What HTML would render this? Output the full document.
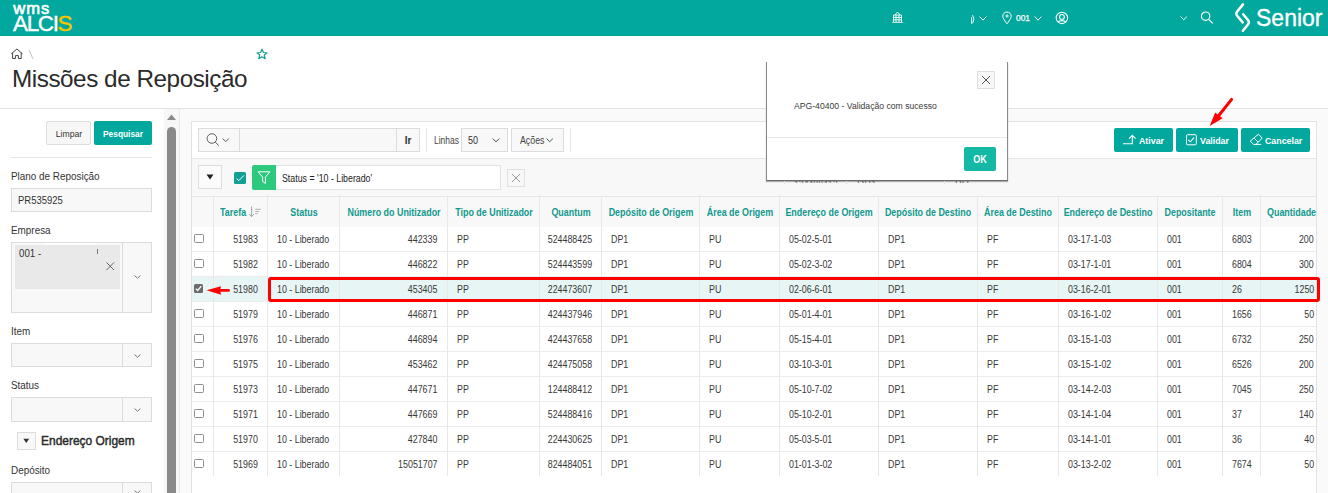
<!DOCTYPE html>
<html><head><meta charset="utf-8"><title>Missões de Reposição</title>
<style>
html,body{margin:0;padding:0;}
body{width:1328px;height:493px;overflow:hidden;position:relative;background:#fff;font-family:"Liberation Sans",sans-serif;color:#333;}
.a{position:absolute;display:block;}
.t{position:absolute;white-space:nowrap;}
</style></head><body>
<div class="a" style="left:0px;top:0px;width:1328px;height:36px;background:#02a89d"></div>
<div class="t" style="left:13.30px;top:0.75px;font-size:16.6px;line-height:16.6px;transform-origin:0 0;color:#fff;letter-spacing:0.9px;-webkit-text-stroke:0.6px #fff;">wms</div>
<div class="t" style="left:13.00px;top:13.44px;font-size:22.4px;line-height:22.4px;transform-origin:0 0;color:#fff;letter-spacing:-1.3px;-webkit-text-stroke:0.4px #fff;">ALCI<span style="color:#f6c500;-webkit-text-stroke:0.4px #f6c500">S</span></div>
<svg class="a" style="left:891px;top:10px" width="13" height="14" viewBox="0 0 13 14"><g fill="none" stroke="#fff" stroke-width="0.9"><path d="M2.5 12V5h8v7"/><path d="M4 5 6.5 2 9 5"/><path d="M1.2 12.3h10.6"/><path d="M2.5 7.4h8M2.5 9.8h8M5 5v7M8 5v7"/></g></svg>
<svg class="a" style="left:969px;top:14px" width="8" height="11" viewBox="0 0 8 11"><path d="M2.6 3.2V9.8" stroke="#fff" stroke-width="0.9"/><path d="M3.6 1.2Q6.2 5.2 3.6 9.2" fill="none" stroke="#fff" stroke-width="1"/></svg>
<svg class="a" style="left:979px;top:15.5px" width="8" height="5" viewBox="0 0 8 5"><path d="M0.6 0.6 4.0 4.2 7.4 0.6" fill="none" stroke="#fff" stroke-width="1.0"/></svg>
<svg class="a" style="left:1001px;top:11px" width="12" height="14" viewBox="0 0 12 14"><path d="M6 12.8C6 12.8 1.8 7.6 1.8 5.2A4.2 4.2 0 0 1 10.2 5.2C10.2 7.6 6 12.8 6 12.8Z" fill="none" stroke="#fff" stroke-width="1"/><circle cx="6" cy="5" r="1.1" fill="none" stroke="#fff" stroke-width="0.9"/></svg>
<div class="t" style="left:1016.20px;top:13.00px;font-size:9.8px;line-height:9.8px;transform:scaleX(0.86);transform-origin:0 0;color:#fff;-webkit-text-stroke:0.25px #fff;">001</div>
<svg class="a" style="left:1034px;top:15.5px" width="8" height="5" viewBox="0 0 8 5"><path d="M0.6 0.6 4.0 4.2 7.4 0.6" fill="none" stroke="#fff" stroke-width="1.0"/></svg>
<svg class="a" style="left:1055px;top:11px" width="14" height="14" viewBox="0 0 14 14"><circle cx="6.9" cy="6.9" r="5.7" fill="none" stroke="#fff" stroke-width="1.1"/><circle cx="6.9" cy="5.9" r="2.4" fill="none" stroke="#fff" stroke-width="1.1"/><path d="M3.2 11C4.3 9.1 9.5 9.1 10.6 11" fill="none" stroke="#fff" stroke-width="1.1"/></svg>
<svg class="a" style="left:1180px;top:16px" width="7.5" height="4.5" viewBox="0 0 7.5 4.5"><path d="M0.6 0.6 3.75 3.7 6.9 0.6" fill="none" stroke="#fff" stroke-width="1.0"/></svg>
<svg class="a" style="left:1200px;top:11px" width="14" height="13" viewBox="0 0 14 13"><circle cx="5.6" cy="5.2" r="4.2" fill="none" stroke="#fff" stroke-width="1.2"/><path d="M8.6 8.4 12.8 12.4" stroke="#fff" stroke-width="1.3"/></svg>
<svg class="a" style="left:1234px;top:3px" width="18" height="30" viewBox="0 0 18 30"><path d="M9 1.4 3.3 8.4Q1.4 10.7 3.3 13L8.7 19.4" fill="none" stroke="#fff" stroke-width="2.5" stroke-linecap="round"/><path d="M9.1 11.2 14 17Q15.8 19.2 14 21.5L8.9 27.8" fill="none" stroke="#fff" stroke-width="2.5" stroke-linecap="round"/></svg>
<div class="t" style="left:1256.40px;top:5.78px;font-size:24.6px;line-height:24.6px;transform:scaleX(0.935);transform-origin:0 0;color:#fff;-webkit-text-stroke:0.35px #fff;">Senior</div>
<svg class="a" style="left:10px;top:48px" width="14" height="12" viewBox="0 0 14 12"><path d="M1.3 5.8 6.9 1 12.5 5.8M2.6 4.8V10.5H5.4V7.6H8.4V10.5H11.2V4.8" fill="none" stroke="#3a3a3a" stroke-width="0.95" stroke-linejoin="round"/></svg>
<svg class="a" style="left:28px;top:49px" width="6" height="11" viewBox="0 0 6 11"><path d="M1 1 5 10" stroke="#bbb" stroke-width="0.9"/></svg>
<svg class="a" style="left:255px;top:47px" width="14" height="13" viewBox="0 0 14 13"><path d="M7 2.2 8.4 5.5 12 5.8 9.3 8.1 10.2 11.6 7 9.7 3.8 11.6 4.7 8.1 2 5.8 5.6 5.5Z" fill="none" stroke="#1a9e93" stroke-width="1.25" stroke-linejoin="round"/></svg>
<div class="t" style="left:12.00px;top:66.83px;font-size:24.3px;line-height:24.3px;transform-origin:0 0;color:#2b2b2b;letter-spacing:-0.47px;">Missões de Reposição</div>
<div class="a" style="left:0px;top:108px;width:1328px;height:1px;background:#e2e2e2"></div>
<div class="a" style="left:164px;top:109px;width:15px;height:384px;background:#f7f7f7"></div>
<div class="a" style="left:179px;top:109px;width:1px;height:384px;background:#e8e8e8"></div>
<svg class="a" style="left:166px;top:113px" width="11" height="8" viewBox="0 0 11 8"><path d="M1 7 5.5 1.5 10 7Z" fill="#8a8a8a"/></svg>
<div class="a" style="left:167px;top:127px;width:9px;height:366px;background:#8a8a8a;border-radius:4.5px 4.5px 0 0"></div>
<div class="a" style="left:46px;top:121px;width:45px;height:24px;background:#f7f7f7;border:1px solid #dedede;box-sizing:border-box;border-radius:2px"></div>
<div class="t" style="left:-31.50px;width:200px;top:129.07px;font-size:9.6px;line-height:9.6px;text-align:center;transform:scaleX(0.9);transform-origin:50% 0;color:#333;">Limpar</div>
<div class="a" style="left:94px;top:121px;width:58px;height:24px;background:#02a89d;border-radius:2px"></div>
<div class="t" style="left:23.00px;width:200px;top:129.07px;font-size:9.6px;line-height:9.6px;text-align:center;transform:scaleX(0.87);transform-origin:50% 0;color:#fff;font-weight:bold;">Pesquisar</div>
<div class="a" style="left:11px;top:157px;width:141px;height:1px;background:#e5e5e5"></div>
<div class="t" style="left:11.20px;top:171.49px;font-size:11px;line-height:11px;transform:scaleX(0.9);transform-origin:0 0;color:#333;">Plano de Reposição</div>
<div class="a" style="left:11px;top:188px;width:141px;height:24px;background:#f8f8f8;border:1px solid #dcdcdc;box-sizing:border-box"></div>
<div class="t" style="left:17.50px;top:195.26px;font-size:10.8px;line-height:10.8px;transform:scaleX(0.88);transform-origin:0 0;color:#333;">PR535925</div>
<div class="t" style="left:11.20px;top:224.79px;font-size:11px;line-height:11px;transform:scaleX(0.9);transform-origin:0 0;color:#333;">Empresa</div>
<div class="a" style="left:11px;top:242px;width:141px;height:71px;background:#f8f8f8;border:1px solid #dcdcdc;box-sizing:border-box"></div>
<div class="a" style="left:122px;top:242px;width:1px;height:71px;background:#dcdcdc"></div>
<div class="a" style="left:15px;top:245px;width:105px;height:44px;background:#e9e9e9"></div>
<div class="a" style="left:42px;top:243px;width:55px;height:2px;background:#fdfdfd"></div>
<div class="t" style="left:18.50px;top:248.36px;font-size:10.8px;line-height:10.8px;transform:scaleX(0.9);transform-origin:0 0;color:#333;">001 -</div>
<div class="a" style="left:97px;top:249px;width:1px;height:5px;background:#777"></div>
<svg class="a" style="left:105px;top:261px" width="10" height="10" viewBox="0 0 10 10"><path d="M1.5 1.5 9 9M9 1.5 1.5 9" stroke="#555" stroke-width="0.9"/></svg>
<svg class="a" style="left:133.5px;top:275px" width="7" height="4" viewBox="0 0 7 4"><path d="M0.6 0.6 3.5 3.2 6.4 0.6" fill="none" stroke="#777" stroke-width="1"/></svg>
<div class="t" style="left:11.20px;top:325.89px;font-size:11px;line-height:11px;transform:scaleX(0.9);transform-origin:0 0;color:#333;">Item</div>
<div class="a" style="left:11px;top:343px;width:141px;height:24px;background:#f8f8f8;border:1px solid #dcdcdc;box-sizing:border-box"></div>
<div class="a" style="left:122px;top:343px;width:1px;height:24px;background:#dcdcdc"></div>
<svg class="a" style="left:133.5px;top:353.5px" width="7" height="4" viewBox="0 0 7 4"><path d="M0.6 0.6 3.5 3.2 6.4 0.6" fill="none" stroke="#777" stroke-width="1"/></svg>
<div class="t" style="left:11.20px;top:379.89px;font-size:11px;line-height:11px;transform:scaleX(0.9);transform-origin:0 0;color:#333;">Status</div>
<div class="a" style="left:11px;top:397px;width:141px;height:25px;background:#f8f8f8;border:1px solid #dcdcdc;box-sizing:border-box"></div>
<div class="a" style="left:122px;top:397px;width:1px;height:25px;background:#dcdcdc"></div>
<svg class="a" style="left:133.5px;top:408px" width="7" height="4" viewBox="0 0 7 4"><path d="M0.6 0.6 3.5 3.2 6.4 0.6" fill="none" stroke="#777" stroke-width="1"/></svg>
<div class="a" style="left:17px;top:432px;width:19px;height:18px;background:#f8f8f8;border:1px solid #dcdcdc;box-sizing:border-box"></div>
<svg class="a" style="left:23px;top:438px" width="7" height="6" viewBox="0 0 7 6"><path d="M0.3 0.8H6.2L3.25 4.9Z" fill="#333"/></svg>
<div class="t" style="left:41.40px;top:433.60px;font-size:13px;line-height:13px;transform:scaleX(0.92);transform-origin:0 0;color:#2a2a2a;-webkit-text-stroke:0.45px #2a2a2a;">Endereço Origem</div>
<div class="t" style="left:11.20px;top:464.89px;font-size:11px;line-height:11px;transform:scaleX(0.9);transform-origin:0 0;color:#333;">Depósito</div>
<div class="a" style="left:11px;top:482px;width:141px;height:18px;background:#f8f8f8;border:1px solid #dcdcdc;box-sizing:border-box"></div>
<div class="a" style="left:122px;top:482px;width:1px;height:11px;background:#dcdcdc"></div>
<svg class="a" style="left:133.5px;top:490px" width="7" height="4" viewBox="0 0 7 4"><path d="M0.6 0.6 3.5 3.2 6.4 0.6" fill="none" stroke="#777" stroke-width="1"/></svg>
<div class="a" style="left:180px;top:109px;width:1148px;height:384px;background:#fafafa"></div>
<div class="a" style="left:191px;top:121px;width:1126px;height:379px;background:#fff;border:1px solid #e2e2e2;box-sizing:border-box"></div>
<div class="a" style="left:192px;top:158px;width:1124px;height:1px;background:#e6e6e6"></div>
<div class="a" style="left:192px;top:159px;width:1124px;height:37px;background:#f8f8f8"></div>
<div class="a" style="left:192px;top:196px;width:1124px;height:1px;background:#e6e6e6"></div>
<div class="a" style="left:192px;top:197px;width:1124px;height:30px;background:#f8f8f8"></div>
<div class="a" style="left:198px;top:128px;width:222px;height:24px;background:#f8f8f8;border:1px solid #dcdcdc;box-sizing:border-box"></div>
<div class="a" style="left:239px;top:128px;width:1px;height:24px;background:#dcdcdc"></div>
<div class="a" style="left:396px;top:128px;width:1px;height:24px;background:#dcdcdc"></div>
<svg class="a" style="left:205px;top:133px" width="15" height="14" viewBox="0 0 15 14"><circle cx="6.9" cy="5.5" r="4.8" fill="none" stroke="#555" stroke-width="0.95"/><path d="M10.3 9.1 13.7 12.6" stroke="#555" stroke-width="0.95"/></svg>
<svg class="a" style="left:221.5px;top:137.6px" width="7.5" height="4.4" viewBox="0 0 7.5 4.4"><path d="M0.6 0.6 3.75 3.6000000000000005 6.9 0.6" fill="none" stroke="#555" stroke-width="0.95"/></svg>
<div class="t" style="left:308.00px;width:200px;top:136.34px;font-size:10px;line-height:10px;text-align:center;transform-origin:50% 0;color:#333;font-weight:bold;">Ir</div>
<div class="a" style="left:426px;top:128px;width:1px;height:24px;background:#e5e5e5"></div>
<div class="t" style="left:433.50px;top:136.34px;font-size:10px;line-height:10px;transform:scaleX(0.85);transform-origin:0 0;color:#444;">Linhas</div>
<div class="a" style="left:461px;top:128px;width:47px;height:24px;background:#f8f8f8;border:1px solid #dcdcdc;box-sizing:border-box"></div>
<div class="t" style="left:468.00px;top:136.34px;font-size:10px;line-height:10px;transform:scaleX(0.9);transform-origin:0 0;color:#333;">50</div>
<svg class="a" style="left:492px;top:138px" width="8" height="4.5" viewBox="0 0 8 4.5"><path d="M0.6 0.6 4.0 3.7 7.4 0.6" fill="none" stroke="#555" stroke-width="1"/></svg>
<div class="a" style="left:511px;top:128px;width:53px;height:24px;background:#f8f8f8;border:1px solid #dcdcdc;box-sizing:border-box"></div>
<div class="t" style="left:520.00px;top:136.34px;font-size:10px;line-height:10px;transform:scaleX(0.88);transform-origin:0 0;color:#444;">Ações</div>
<svg class="a" style="left:546px;top:138px" width="7.5" height="4.5" viewBox="0 0 7.5 4.5"><path d="M0.6 0.6 3.75 3.7 6.9 0.6" fill="none" stroke="#555" stroke-width="1"/></svg>
<div class="a" style="left:570px;top:128px;width:1px;height:24px;background:#e5e5e5"></div>
<div class="a" style="left:1114px;top:128px;width:59px;height:24px;background:#02a89d;border-radius:2px"></div>
<svg class="a" style="left:1122px;top:133px" width="15" height="13" viewBox="0 0 15 13"><path d="M1 10.8H10.3V2.6M7 5.6 10.3 2.3 13.6 5.6" fill="none" stroke="#fff" stroke-width="1.05"/></svg>
<div class="t" style="left:1138.50px;top:136.19px;font-size:9.7px;line-height:9.7px;transform:scaleX(0.91);transform-origin:0 0;color:#fff;font-weight:bold;">Ativar</div>
<div class="a" style="left:1176px;top:128px;width:62px;height:24px;background:#02a89d;border-radius:2px"></div>
<svg class="a" style="left:1185px;top:133px" width="13" height="13" viewBox="0 0 13 13"><rect x="1.5" y="1.7" width="9.8" height="10.1" rx="1" fill="none" stroke="#fff" stroke-width="1"/><path d="M3.2 6.8 5.4 8.8 8.9 4.6" fill="none" stroke="#fff" stroke-width="1.1"/></svg>
<div class="t" style="left:1199.50px;top:136.19px;font-size:9.7px;line-height:9.7px;transform:scaleX(0.91);transform-origin:0 0;color:#fff;font-weight:bold;">Validar</div>
<div class="a" style="left:1241px;top:128px;width:69px;height:24px;background:#02a89d;border-radius:2px"></div>
<svg class="a" style="left:1249px;top:132px" width="14" height="14" viewBox="0 0 14 14"><path d="M9.4 2.2 13.2 6.1 6.9 12.4H4.6L1.2 9.1Z M6.9 12.4H12.2" fill="none" stroke="#fff" stroke-width="1" stroke-linejoin="round"/><path d="M5.2 6.2 9.1 10.1" stroke="#fff" stroke-width="1"/></svg>
<div class="t" style="left:1265.00px;top:136.19px;font-size:9.7px;line-height:9.7px;transform:scaleX(0.91);transform-origin:0 0;color:#fff;font-weight:bold;">Cancelar</div>
<div class="a" style="left:198px;top:165px;width:24px;height:24px;background:#fbfbfb;border:1px solid #dedede;box-sizing:border-box"></div>
<svg class="a" style="left:206px;top:174px" width="8" height="6" viewBox="0 0 8 6"><path d="M0.5 0.5H7.5L4 5.5Z" fill="#222"/></svg>
<div class="a" style="left:234px;top:172px;width:12px;height:12px;background:#11a094;border-radius:1.5px"></div>
<svg class="a" style="left:235px;top:173px" width="10" height="10" viewBox="0 0 10 10"><path d="M1.6 5.6 3.8 7.6 9 2.4" fill="none" stroke="#fff" stroke-width="1"/></svg>
<div class="a" style="left:252px;top:165px;width:24px;height:25px;background:#2dca7e;border-radius:2px 0 0 2px"></div>
<svg class="a" style="left:256px;top:169px" width="16" height="16" viewBox="0 0 16 16"><path d="M2.2 2.8H13.8L9.4 8.2V14.4L6.6 12.4V8.2Z" fill="none" stroke="#fff" stroke-width="1" stroke-linejoin="round"/></svg>
<div class="a" style="left:276px;top:165px;width:225px;height:25px;background:#fff;border:1px solid #e2e2e2;border-left:none;box-sizing:border-box"></div>
<div class="t" style="left:281.50px;top:174.13px;font-size:10px;line-height:10px;transform:scaleX(0.88);transform-origin:0 0;color:#222;">Status = '10 - Liberado'</div>
<div class="a" style="left:507px;top:169px;width:18px;height:18px;background:#f8f8f8;border:1px solid #e0e0e0;box-sizing:border-box"></div>
<svg class="a" style="left:511px;top:173px" width="10" height="10" viewBox="0 0 10 10"><path d="M1 1 9 9M9 1 1 9" stroke="#999" stroke-width="1"/></svg>
<div class="a" style="left:192px;top:276px;width:1124px;height:25px;background:#e7f5f4"></div>
<div class="a" style="left:192px;top:251px;width:1124px;height:1px;background:#ececec"></div>
<div class="a" style="left:192px;top:276px;width:1124px;height:1px;background:#ececec"></div>
<div class="a" style="left:192px;top:301px;width:1124px;height:1px;background:#ececec"></div>
<div class="a" style="left:192px;top:326px;width:1124px;height:1px;background:#ececec"></div>
<div class="a" style="left:192px;top:351px;width:1124px;height:1px;background:#ececec"></div>
<div class="a" style="left:192px;top:376px;width:1124px;height:1px;background:#ececec"></div>
<div class="a" style="left:192px;top:401px;width:1124px;height:1px;background:#ececec"></div>
<div class="a" style="left:192px;top:426px;width:1124px;height:1px;background:#ececec"></div>
<div class="a" style="left:192px;top:451px;width:1124px;height:1px;background:#ececec"></div>
<div class="a" style="left:213px;top:197px;width:1px;height:279px;background:#e8e8e8"></div>
<div class="a" style="left:267px;top:197px;width:1px;height:279px;background:#e8e8e8"></div>
<div class="a" style="left:339px;top:197px;width:1px;height:279px;background:#e8e8e8"></div>
<div class="a" style="left:447px;top:197px;width:1px;height:279px;background:#e8e8e8"></div>
<div class="a" style="left:539px;top:197px;width:1px;height:279px;background:#e8e8e8"></div>
<div class="a" style="left:601px;top:197px;width:1px;height:279px;background:#e8e8e8"></div>
<div class="a" style="left:699px;top:197px;width:1px;height:279px;background:#e8e8e8"></div>
<div class="a" style="left:779px;top:197px;width:1px;height:279px;background:#e8e8e8"></div>
<div class="a" style="left:878px;top:197px;width:1px;height:279px;background:#e8e8e8"></div>
<div class="a" style="left:977px;top:197px;width:1px;height:279px;background:#e8e8e8"></div>
<div class="a" style="left:1058px;top:197px;width:1px;height:279px;background:#e8e8e8"></div>
<div class="a" style="left:1157px;top:197px;width:1px;height:279px;background:#e8e8e8"></div>
<div class="a" style="left:1222px;top:197px;width:1px;height:279px;background:#e8e8e8"></div>
<div class="a" style="left:1260px;top:197px;width:1px;height:279px;background:#e8e8e8"></div>
<div class="t" style="left:220.00px;top:207.97px;font-size:10.2px;line-height:10.2px;transform:scaleX(0.875);transform-origin:0 0;color:#10998e;font-weight:bold;">Tarefa</div>
<svg class="a" style="left:249px;top:206px" width="13" height="12" viewBox="0 0 13 12"><path d="M2.6 0.5V10.5M0.2 8 2.6 10.6 5 8" fill="none" stroke="#999" stroke-width="0.9"/><path d="M6.3 3.3H11.9M6.3 5.5H10.3M6.3 7.6H8.8" stroke="#aaa" stroke-width="0.9"/></svg>
<div class="t" style="left:203.50px;width:200px;top:207.97px;font-size:10.2px;line-height:10.2px;text-align:center;transform:scaleX(0.875);transform-origin:50% 0;color:#10998e;font-weight:bold;">Status</div>
<div class="t" style="left:293.50px;width:200px;top:207.97px;font-size:10.2px;line-height:10.2px;text-align:center;transform:scaleX(0.875);transform-origin:50% 0;color:#10998e;font-weight:bold;">Número do Unitizador</div>
<div class="t" style="left:393.50px;width:200px;top:207.97px;font-size:10.2px;line-height:10.2px;text-align:center;transform:scaleX(0.875);transform-origin:50% 0;color:#10998e;font-weight:bold;">Tipo de Unitizador</div>
<div class="t" style="left:470.50px;width:200px;top:207.97px;font-size:10.2px;line-height:10.2px;text-align:center;transform:scaleX(0.875);transform-origin:50% 0;color:#10998e;font-weight:bold;">Quantum</div>
<div class="t" style="left:550.50px;width:200px;top:207.97px;font-size:10.2px;line-height:10.2px;text-align:center;transform:scaleX(0.875);transform-origin:50% 0;color:#10998e;font-weight:bold;">Depósito de Origem</div>
<div class="t" style="left:639.50px;width:200px;top:207.97px;font-size:10.2px;line-height:10.2px;text-align:center;transform:scaleX(0.875);transform-origin:50% 0;color:#10998e;font-weight:bold;">Área de Origem</div>
<div class="t" style="left:729.00px;width:200px;top:207.97px;font-size:10.2px;line-height:10.2px;text-align:center;transform:scaleX(0.875);transform-origin:50% 0;color:#10998e;font-weight:bold;">Endereço de Origem</div>
<div class="t" style="left:828.00px;width:200px;top:207.97px;font-size:10.2px;line-height:10.2px;text-align:center;transform:scaleX(0.875);transform-origin:50% 0;color:#10998e;font-weight:bold;">Depósito de Destino</div>
<div class="t" style="left:918.00px;width:200px;top:207.97px;font-size:10.2px;line-height:10.2px;text-align:center;transform:scaleX(0.875);transform-origin:50% 0;color:#10998e;font-weight:bold;">Área de Destino</div>
<div class="t" style="left:1008.00px;width:200px;top:207.97px;font-size:10.2px;line-height:10.2px;text-align:center;transform:scaleX(0.875);transform-origin:50% 0;color:#10998e;font-weight:bold;">Endereço de Destino</div>
<div class="t" style="left:1090.00px;width:200px;top:207.97px;font-size:10.2px;line-height:10.2px;text-align:center;transform:scaleX(0.875);transform-origin:50% 0;color:#10998e;font-weight:bold;">Depositante</div>
<div class="t" style="left:1141.50px;width:200px;top:207.97px;font-size:10.2px;line-height:10.2px;text-align:center;transform:scaleX(0.875);transform-origin:50% 0;color:#10998e;font-weight:bold;">Item</div>
<div class="t" style="left:1267.30px;top:207.97px;font-size:10.2px;line-height:10.2px;transform:scaleX(0.875);transform-origin:0 0;color:#10998e;font-weight:bold;white-space:nowrap;">Quantidade</div>
<div class="a" style="left:194px;top:234px;width:9.5px;height:9px;border:1px solid #8f8f8f;border-radius:1.5px;box-sizing:border-box;background:#fff"></div>
<div class="t" style="right:1070.40px;top:235.44px;font-size:10px;line-height:10px;text-align:right;transform:scaleX(0.885);transform-origin:100% 0;color:#383838;">51983</div>
<div class="t" style="left:276.90px;top:235.44px;font-size:10px;line-height:10px;transform:scaleX(0.885);transform-origin:0 0;color:#383838;">10 - Liberado</div>
<div class="t" style="right:890.40px;top:235.44px;font-size:10px;line-height:10px;text-align:right;transform:scaleX(0.885);transform-origin:100% 0;color:#383838;">442339</div>
<div class="t" style="left:456.90px;top:235.44px;font-size:10px;line-height:10px;transform:scaleX(0.885);transform-origin:0 0;color:#383838;">PP</div>
<div class="t" style="right:736.40px;top:235.44px;font-size:10px;line-height:10px;text-align:right;transform:scaleX(0.885);transform-origin:100% 0;color:#383838;">524488425</div>
<div class="t" style="left:610.90px;top:235.44px;font-size:10px;line-height:10px;transform:scaleX(0.885);transform-origin:0 0;color:#383838;">DP1</div>
<div class="t" style="left:708.90px;top:235.44px;font-size:10px;line-height:10px;transform:scaleX(0.885);transform-origin:0 0;color:#383838;">PU</div>
<div class="t" style="left:788.90px;top:235.44px;font-size:10px;line-height:10px;transform:scaleX(0.885);transform-origin:0 0;color:#383838;">05-02-5-01</div>
<div class="t" style="left:887.90px;top:235.44px;font-size:10px;line-height:10px;transform:scaleX(0.885);transform-origin:0 0;color:#383838;">DP1</div>
<div class="t" style="left:986.90px;top:235.44px;font-size:10px;line-height:10px;transform:scaleX(0.885);transform-origin:0 0;color:#383838;">PF</div>
<div class="t" style="left:1067.90px;top:235.44px;font-size:10px;line-height:10px;transform:scaleX(0.885);transform-origin:0 0;color:#383838;">03-17-1-03</div>
<div class="t" style="left:1166.90px;top:235.44px;font-size:10px;line-height:10px;transform:scaleX(0.885);transform-origin:0 0;color:#383838;">001</div>
<div class="t" style="left:1231.90px;top:235.44px;font-size:10px;line-height:10px;transform:scaleX(0.885);transform-origin:0 0;color:#383838;">6803</div>
<div class="t" style="right:14.20px;top:235.44px;font-size:10px;line-height:10px;text-align:right;transform:scaleX(0.885);transform-origin:100% 0;color:#383838;">200</div>
<div class="a" style="left:194px;top:259px;width:9.5px;height:9px;border:1px solid #8f8f8f;border-radius:1.5px;box-sizing:border-box;background:#fff"></div>
<div class="t" style="right:1070.40px;top:260.44px;font-size:10px;line-height:10px;text-align:right;transform:scaleX(0.885);transform-origin:100% 0;color:#383838;">51982</div>
<div class="t" style="left:276.90px;top:260.44px;font-size:10px;line-height:10px;transform:scaleX(0.885);transform-origin:0 0;color:#383838;">10 - Liberado</div>
<div class="t" style="right:890.40px;top:260.44px;font-size:10px;line-height:10px;text-align:right;transform:scaleX(0.885);transform-origin:100% 0;color:#383838;">446822</div>
<div class="t" style="left:456.90px;top:260.44px;font-size:10px;line-height:10px;transform:scaleX(0.885);transform-origin:0 0;color:#383838;">PP</div>
<div class="t" style="right:736.40px;top:260.44px;font-size:10px;line-height:10px;text-align:right;transform:scaleX(0.885);transform-origin:100% 0;color:#383838;">524443599</div>
<div class="t" style="left:610.90px;top:260.44px;font-size:10px;line-height:10px;transform:scaleX(0.885);transform-origin:0 0;color:#383838;">DP1</div>
<div class="t" style="left:708.90px;top:260.44px;font-size:10px;line-height:10px;transform:scaleX(0.885);transform-origin:0 0;color:#383838;">PU</div>
<div class="t" style="left:788.90px;top:260.44px;font-size:10px;line-height:10px;transform:scaleX(0.885);transform-origin:0 0;color:#383838;">05-02-3-02</div>
<div class="t" style="left:887.90px;top:260.44px;font-size:10px;line-height:10px;transform:scaleX(0.885);transform-origin:0 0;color:#383838;">DP1</div>
<div class="t" style="left:986.90px;top:260.44px;font-size:10px;line-height:10px;transform:scaleX(0.885);transform-origin:0 0;color:#383838;">PF</div>
<div class="t" style="left:1067.90px;top:260.44px;font-size:10px;line-height:10px;transform:scaleX(0.885);transform-origin:0 0;color:#383838;">03-17-1-01</div>
<div class="t" style="left:1166.90px;top:260.44px;font-size:10px;line-height:10px;transform:scaleX(0.885);transform-origin:0 0;color:#383838;">001</div>
<div class="t" style="left:1231.90px;top:260.44px;font-size:10px;line-height:10px;transform:scaleX(0.885);transform-origin:0 0;color:#383838;">6804</div>
<div class="t" style="right:14.20px;top:260.44px;font-size:10px;line-height:10px;text-align:right;transform:scaleX(0.885);transform-origin:100% 0;color:#383838;">300</div>
<div class="a" style="left:194px;top:284px;width:9px;height:9px;background:#6b6b6b;border-radius:1.5px"></div>
<svg class="a" style="left:194px;top:284px" width="9" height="9" viewBox="0 0 9 9"><path d="M1.8 4.6 3.7 6.5 7.3 2.2" fill="none" stroke="#fff" stroke-width="1.3"/></svg>
<div class="t" style="right:1070.40px;top:285.44px;font-size:10px;line-height:10px;text-align:right;transform:scaleX(0.885);transform-origin:100% 0;color:#383838;">51980</div>
<div class="t" style="left:276.90px;top:285.44px;font-size:10px;line-height:10px;transform:scaleX(0.885);transform-origin:0 0;color:#383838;">10 - Liberado</div>
<div class="t" style="right:890.40px;top:285.44px;font-size:10px;line-height:10px;text-align:right;transform:scaleX(0.885);transform-origin:100% 0;color:#383838;">453405</div>
<div class="t" style="left:456.90px;top:285.44px;font-size:10px;line-height:10px;transform:scaleX(0.885);transform-origin:0 0;color:#383838;">PP</div>
<div class="t" style="right:736.40px;top:285.44px;font-size:10px;line-height:10px;text-align:right;transform:scaleX(0.885);transform-origin:100% 0;color:#383838;">224473607</div>
<div class="t" style="left:610.90px;top:285.44px;font-size:10px;line-height:10px;transform:scaleX(0.885);transform-origin:0 0;color:#383838;">DP1</div>
<div class="t" style="left:708.90px;top:285.44px;font-size:10px;line-height:10px;transform:scaleX(0.885);transform-origin:0 0;color:#383838;">PU</div>
<div class="t" style="left:788.90px;top:285.44px;font-size:10px;line-height:10px;transform:scaleX(0.885);transform-origin:0 0;color:#383838;">02-06-6-01</div>
<div class="t" style="left:887.90px;top:285.44px;font-size:10px;line-height:10px;transform:scaleX(0.885);transform-origin:0 0;color:#383838;">DP1</div>
<div class="t" style="left:986.90px;top:285.44px;font-size:10px;line-height:10px;transform:scaleX(0.885);transform-origin:0 0;color:#383838;">PF</div>
<div class="t" style="left:1067.90px;top:285.44px;font-size:10px;line-height:10px;transform:scaleX(0.885);transform-origin:0 0;color:#383838;">03-16-2-01</div>
<div class="t" style="left:1166.90px;top:285.44px;font-size:10px;line-height:10px;transform:scaleX(0.885);transform-origin:0 0;color:#383838;">001</div>
<div class="t" style="left:1231.90px;top:285.44px;font-size:10px;line-height:10px;transform:scaleX(0.885);transform-origin:0 0;color:#383838;">26</div>
<div class="t" style="right:14.20px;top:285.44px;font-size:10px;line-height:10px;text-align:right;transform:scaleX(0.885);transform-origin:100% 0;color:#383838;">1250</div>
<div class="a" style="left:194px;top:309px;width:9.5px;height:9px;border:1px solid #8f8f8f;border-radius:1.5px;box-sizing:border-box;background:#fff"></div>
<div class="t" style="right:1070.40px;top:310.44px;font-size:10px;line-height:10px;text-align:right;transform:scaleX(0.885);transform-origin:100% 0;color:#383838;">51979</div>
<div class="t" style="left:276.90px;top:310.44px;font-size:10px;line-height:10px;transform:scaleX(0.885);transform-origin:0 0;color:#383838;">10 - Liberado</div>
<div class="t" style="right:890.40px;top:310.44px;font-size:10px;line-height:10px;text-align:right;transform:scaleX(0.885);transform-origin:100% 0;color:#383838;">446871</div>
<div class="t" style="left:456.90px;top:310.44px;font-size:10px;line-height:10px;transform:scaleX(0.885);transform-origin:0 0;color:#383838;">PP</div>
<div class="t" style="right:736.40px;top:310.44px;font-size:10px;line-height:10px;text-align:right;transform:scaleX(0.885);transform-origin:100% 0;color:#383838;">424437946</div>
<div class="t" style="left:610.90px;top:310.44px;font-size:10px;line-height:10px;transform:scaleX(0.885);transform-origin:0 0;color:#383838;">DP1</div>
<div class="t" style="left:708.90px;top:310.44px;font-size:10px;line-height:10px;transform:scaleX(0.885);transform-origin:0 0;color:#383838;">PU</div>
<div class="t" style="left:788.90px;top:310.44px;font-size:10px;line-height:10px;transform:scaleX(0.885);transform-origin:0 0;color:#383838;">05-01-4-01</div>
<div class="t" style="left:887.90px;top:310.44px;font-size:10px;line-height:10px;transform:scaleX(0.885);transform-origin:0 0;color:#383838;">DP1</div>
<div class="t" style="left:986.90px;top:310.44px;font-size:10px;line-height:10px;transform:scaleX(0.885);transform-origin:0 0;color:#383838;">PF</div>
<div class="t" style="left:1067.90px;top:310.44px;font-size:10px;line-height:10px;transform:scaleX(0.885);transform-origin:0 0;color:#383838;">03-16-1-02</div>
<div class="t" style="left:1166.90px;top:310.44px;font-size:10px;line-height:10px;transform:scaleX(0.885);transform-origin:0 0;color:#383838;">001</div>
<div class="t" style="left:1231.90px;top:310.44px;font-size:10px;line-height:10px;transform:scaleX(0.885);transform-origin:0 0;color:#383838;">1656</div>
<div class="t" style="right:14.20px;top:310.44px;font-size:10px;line-height:10px;text-align:right;transform:scaleX(0.885);transform-origin:100% 0;color:#383838;">50</div>
<div class="a" style="left:194px;top:334px;width:9.5px;height:9px;border:1px solid #8f8f8f;border-radius:1.5px;box-sizing:border-box;background:#fff"></div>
<div class="t" style="right:1070.40px;top:335.44px;font-size:10px;line-height:10px;text-align:right;transform:scaleX(0.885);transform-origin:100% 0;color:#383838;">51976</div>
<div class="t" style="left:276.90px;top:335.44px;font-size:10px;line-height:10px;transform:scaleX(0.885);transform-origin:0 0;color:#383838;">10 - Liberado</div>
<div class="t" style="right:890.40px;top:335.44px;font-size:10px;line-height:10px;text-align:right;transform:scaleX(0.885);transform-origin:100% 0;color:#383838;">446894</div>
<div class="t" style="left:456.90px;top:335.44px;font-size:10px;line-height:10px;transform:scaleX(0.885);transform-origin:0 0;color:#383838;">PP</div>
<div class="t" style="right:736.40px;top:335.44px;font-size:10px;line-height:10px;text-align:right;transform:scaleX(0.885);transform-origin:100% 0;color:#383838;">424437658</div>
<div class="t" style="left:610.90px;top:335.44px;font-size:10px;line-height:10px;transform:scaleX(0.885);transform-origin:0 0;color:#383838;">DP1</div>
<div class="t" style="left:708.90px;top:335.44px;font-size:10px;line-height:10px;transform:scaleX(0.885);transform-origin:0 0;color:#383838;">PU</div>
<div class="t" style="left:788.90px;top:335.44px;font-size:10px;line-height:10px;transform:scaleX(0.885);transform-origin:0 0;color:#383838;">05-15-4-01</div>
<div class="t" style="left:887.90px;top:335.44px;font-size:10px;line-height:10px;transform:scaleX(0.885);transform-origin:0 0;color:#383838;">DP1</div>
<div class="t" style="left:986.90px;top:335.44px;font-size:10px;line-height:10px;transform:scaleX(0.885);transform-origin:0 0;color:#383838;">PF</div>
<div class="t" style="left:1067.90px;top:335.44px;font-size:10px;line-height:10px;transform:scaleX(0.885);transform-origin:0 0;color:#383838;">03-15-1-03</div>
<div class="t" style="left:1166.90px;top:335.44px;font-size:10px;line-height:10px;transform:scaleX(0.885);transform-origin:0 0;color:#383838;">001</div>
<div class="t" style="left:1231.90px;top:335.44px;font-size:10px;line-height:10px;transform:scaleX(0.885);transform-origin:0 0;color:#383838;">6732</div>
<div class="t" style="right:14.20px;top:335.44px;font-size:10px;line-height:10px;text-align:right;transform:scaleX(0.885);transform-origin:100% 0;color:#383838;">250</div>
<div class="a" style="left:194px;top:359px;width:9.5px;height:9px;border:1px solid #8f8f8f;border-radius:1.5px;box-sizing:border-box;background:#fff"></div>
<div class="t" style="right:1070.40px;top:360.44px;font-size:10px;line-height:10px;text-align:right;transform:scaleX(0.885);transform-origin:100% 0;color:#383838;">51975</div>
<div class="t" style="left:276.90px;top:360.44px;font-size:10px;line-height:10px;transform:scaleX(0.885);transform-origin:0 0;color:#383838;">10 - Liberado</div>
<div class="t" style="right:890.40px;top:360.44px;font-size:10px;line-height:10px;text-align:right;transform:scaleX(0.885);transform-origin:100% 0;color:#383838;">453462</div>
<div class="t" style="left:456.90px;top:360.44px;font-size:10px;line-height:10px;transform:scaleX(0.885);transform-origin:0 0;color:#383838;">PP</div>
<div class="t" style="right:736.40px;top:360.44px;font-size:10px;line-height:10px;text-align:right;transform:scaleX(0.885);transform-origin:100% 0;color:#383838;">424475058</div>
<div class="t" style="left:610.90px;top:360.44px;font-size:10px;line-height:10px;transform:scaleX(0.885);transform-origin:0 0;color:#383838;">DP1</div>
<div class="t" style="left:708.90px;top:360.44px;font-size:10px;line-height:10px;transform:scaleX(0.885);transform-origin:0 0;color:#383838;">PU</div>
<div class="t" style="left:788.90px;top:360.44px;font-size:10px;line-height:10px;transform:scaleX(0.885);transform-origin:0 0;color:#383838;">03-10-3-01</div>
<div class="t" style="left:887.90px;top:360.44px;font-size:10px;line-height:10px;transform:scaleX(0.885);transform-origin:0 0;color:#383838;">DP1</div>
<div class="t" style="left:986.90px;top:360.44px;font-size:10px;line-height:10px;transform:scaleX(0.885);transform-origin:0 0;color:#383838;">PF</div>
<div class="t" style="left:1067.90px;top:360.44px;font-size:10px;line-height:10px;transform:scaleX(0.885);transform-origin:0 0;color:#383838;">03-15-1-02</div>
<div class="t" style="left:1166.90px;top:360.44px;font-size:10px;line-height:10px;transform:scaleX(0.885);transform-origin:0 0;color:#383838;">001</div>
<div class="t" style="left:1231.90px;top:360.44px;font-size:10px;line-height:10px;transform:scaleX(0.885);transform-origin:0 0;color:#383838;">6526</div>
<div class="t" style="right:14.20px;top:360.44px;font-size:10px;line-height:10px;text-align:right;transform:scaleX(0.885);transform-origin:100% 0;color:#383838;">200</div>
<div class="a" style="left:194px;top:384px;width:9.5px;height:9px;border:1px solid #8f8f8f;border-radius:1.5px;box-sizing:border-box;background:#fff"></div>
<div class="t" style="right:1070.40px;top:385.44px;font-size:10px;line-height:10px;text-align:right;transform:scaleX(0.885);transform-origin:100% 0;color:#383838;">51973</div>
<div class="t" style="left:276.90px;top:385.44px;font-size:10px;line-height:10px;transform:scaleX(0.885);transform-origin:0 0;color:#383838;">10 - Liberado</div>
<div class="t" style="right:890.40px;top:385.44px;font-size:10px;line-height:10px;text-align:right;transform:scaleX(0.885);transform-origin:100% 0;color:#383838;">447671</div>
<div class="t" style="left:456.90px;top:385.44px;font-size:10px;line-height:10px;transform:scaleX(0.885);transform-origin:0 0;color:#383838;">PP</div>
<div class="t" style="right:736.40px;top:385.44px;font-size:10px;line-height:10px;text-align:right;transform:scaleX(0.885);transform-origin:100% 0;color:#383838;">124488412</div>
<div class="t" style="left:610.90px;top:385.44px;font-size:10px;line-height:10px;transform:scaleX(0.885);transform-origin:0 0;color:#383838;">DP1</div>
<div class="t" style="left:708.90px;top:385.44px;font-size:10px;line-height:10px;transform:scaleX(0.885);transform-origin:0 0;color:#383838;">PU</div>
<div class="t" style="left:788.90px;top:385.44px;font-size:10px;line-height:10px;transform:scaleX(0.885);transform-origin:0 0;color:#383838;">05-10-7-02</div>
<div class="t" style="left:887.90px;top:385.44px;font-size:10px;line-height:10px;transform:scaleX(0.885);transform-origin:0 0;color:#383838;">DP1</div>
<div class="t" style="left:986.90px;top:385.44px;font-size:10px;line-height:10px;transform:scaleX(0.885);transform-origin:0 0;color:#383838;">PF</div>
<div class="t" style="left:1067.90px;top:385.44px;font-size:10px;line-height:10px;transform:scaleX(0.885);transform-origin:0 0;color:#383838;">03-14-2-03</div>
<div class="t" style="left:1166.90px;top:385.44px;font-size:10px;line-height:10px;transform:scaleX(0.885);transform-origin:0 0;color:#383838;">001</div>
<div class="t" style="left:1231.90px;top:385.44px;font-size:10px;line-height:10px;transform:scaleX(0.885);transform-origin:0 0;color:#383838;">7045</div>
<div class="t" style="right:14.20px;top:385.44px;font-size:10px;line-height:10px;text-align:right;transform:scaleX(0.885);transform-origin:100% 0;color:#383838;">250</div>
<div class="a" style="left:194px;top:409px;width:9.5px;height:9px;border:1px solid #8f8f8f;border-radius:1.5px;box-sizing:border-box;background:#fff"></div>
<div class="t" style="right:1070.40px;top:410.44px;font-size:10px;line-height:10px;text-align:right;transform:scaleX(0.885);transform-origin:100% 0;color:#383838;">51971</div>
<div class="t" style="left:276.90px;top:410.44px;font-size:10px;line-height:10px;transform:scaleX(0.885);transform-origin:0 0;color:#383838;">10 - Liberado</div>
<div class="t" style="right:890.40px;top:410.44px;font-size:10px;line-height:10px;text-align:right;transform:scaleX(0.885);transform-origin:100% 0;color:#383838;">447669</div>
<div class="t" style="left:456.90px;top:410.44px;font-size:10px;line-height:10px;transform:scaleX(0.885);transform-origin:0 0;color:#383838;">PP</div>
<div class="t" style="right:736.40px;top:410.44px;font-size:10px;line-height:10px;text-align:right;transform:scaleX(0.885);transform-origin:100% 0;color:#383838;">524488416</div>
<div class="t" style="left:610.90px;top:410.44px;font-size:10px;line-height:10px;transform:scaleX(0.885);transform-origin:0 0;color:#383838;">DP1</div>
<div class="t" style="left:708.90px;top:410.44px;font-size:10px;line-height:10px;transform:scaleX(0.885);transform-origin:0 0;color:#383838;">PU</div>
<div class="t" style="left:788.90px;top:410.44px;font-size:10px;line-height:10px;transform:scaleX(0.885);transform-origin:0 0;color:#383838;">05-10-2-01</div>
<div class="t" style="left:887.90px;top:410.44px;font-size:10px;line-height:10px;transform:scaleX(0.885);transform-origin:0 0;color:#383838;">DP1</div>
<div class="t" style="left:986.90px;top:410.44px;font-size:10px;line-height:10px;transform:scaleX(0.885);transform-origin:0 0;color:#383838;">PF</div>
<div class="t" style="left:1067.90px;top:410.44px;font-size:10px;line-height:10px;transform:scaleX(0.885);transform-origin:0 0;color:#383838;">03-14-1-04</div>
<div class="t" style="left:1166.90px;top:410.44px;font-size:10px;line-height:10px;transform:scaleX(0.885);transform-origin:0 0;color:#383838;">001</div>
<div class="t" style="left:1231.90px;top:410.44px;font-size:10px;line-height:10px;transform:scaleX(0.885);transform-origin:0 0;color:#383838;">37</div>
<div class="t" style="right:14.20px;top:410.44px;font-size:10px;line-height:10px;text-align:right;transform:scaleX(0.885);transform-origin:100% 0;color:#383838;">140</div>
<div class="a" style="left:194px;top:434px;width:9.5px;height:9px;border:1px solid #8f8f8f;border-radius:1.5px;box-sizing:border-box;background:#fff"></div>
<div class="t" style="right:1070.40px;top:435.44px;font-size:10px;line-height:10px;text-align:right;transform:scaleX(0.885);transform-origin:100% 0;color:#383838;">51970</div>
<div class="t" style="left:276.90px;top:435.44px;font-size:10px;line-height:10px;transform:scaleX(0.885);transform-origin:0 0;color:#383838;">10 - Liberado</div>
<div class="t" style="right:890.40px;top:435.44px;font-size:10px;line-height:10px;text-align:right;transform:scaleX(0.885);transform-origin:100% 0;color:#383838;">427840</div>
<div class="t" style="left:456.90px;top:435.44px;font-size:10px;line-height:10px;transform:scaleX(0.885);transform-origin:0 0;color:#383838;">PP</div>
<div class="t" style="right:736.40px;top:435.44px;font-size:10px;line-height:10px;text-align:right;transform:scaleX(0.885);transform-origin:100% 0;color:#383838;">224430625</div>
<div class="t" style="left:610.90px;top:435.44px;font-size:10px;line-height:10px;transform:scaleX(0.885);transform-origin:0 0;color:#383838;">DP1</div>
<div class="t" style="left:708.90px;top:435.44px;font-size:10px;line-height:10px;transform:scaleX(0.885);transform-origin:0 0;color:#383838;">PU</div>
<div class="t" style="left:788.90px;top:435.44px;font-size:10px;line-height:10px;transform:scaleX(0.885);transform-origin:0 0;color:#383838;">05-03-5-01</div>
<div class="t" style="left:887.90px;top:435.44px;font-size:10px;line-height:10px;transform:scaleX(0.885);transform-origin:0 0;color:#383838;">DP1</div>
<div class="t" style="left:986.90px;top:435.44px;font-size:10px;line-height:10px;transform:scaleX(0.885);transform-origin:0 0;color:#383838;">PF</div>
<div class="t" style="left:1067.90px;top:435.44px;font-size:10px;line-height:10px;transform:scaleX(0.885);transform-origin:0 0;color:#383838;">03-14-1-01</div>
<div class="t" style="left:1166.90px;top:435.44px;font-size:10px;line-height:10px;transform:scaleX(0.885);transform-origin:0 0;color:#383838;">001</div>
<div class="t" style="left:1231.90px;top:435.44px;font-size:10px;line-height:10px;transform:scaleX(0.885);transform-origin:0 0;color:#383838;">36</div>
<div class="t" style="right:14.20px;top:435.44px;font-size:10px;line-height:10px;text-align:right;transform:scaleX(0.885);transform-origin:100% 0;color:#383838;">40</div>
<div class="a" style="left:194px;top:459px;width:9.5px;height:9px;border:1px solid #8f8f8f;border-radius:1.5px;box-sizing:border-box;background:#fff"></div>
<div class="t" style="right:1070.40px;top:460.44px;font-size:10px;line-height:10px;text-align:right;transform:scaleX(0.885);transform-origin:100% 0;color:#383838;">51969</div>
<div class="t" style="left:276.90px;top:460.44px;font-size:10px;line-height:10px;transform:scaleX(0.885);transform-origin:0 0;color:#383838;">10 - Liberado</div>
<div class="t" style="right:890.40px;top:460.44px;font-size:10px;line-height:10px;text-align:right;transform:scaleX(0.885);transform-origin:100% 0;color:#383838;">15051707</div>
<div class="t" style="left:456.90px;top:460.44px;font-size:10px;line-height:10px;transform:scaleX(0.885);transform-origin:0 0;color:#383838;">PP</div>
<div class="t" style="right:736.40px;top:460.44px;font-size:10px;line-height:10px;text-align:right;transform:scaleX(0.885);transform-origin:100% 0;color:#383838;">824484051</div>
<div class="t" style="left:610.90px;top:460.44px;font-size:10px;line-height:10px;transform:scaleX(0.885);transform-origin:0 0;color:#383838;">DP1</div>
<div class="t" style="left:708.90px;top:460.44px;font-size:10px;line-height:10px;transform:scaleX(0.885);transform-origin:0 0;color:#383838;">PU</div>
<div class="t" style="left:788.90px;top:460.44px;font-size:10px;line-height:10px;transform:scaleX(0.885);transform-origin:0 0;color:#383838;">01-01-3-02</div>
<div class="t" style="left:887.90px;top:460.44px;font-size:10px;line-height:10px;transform:scaleX(0.885);transform-origin:0 0;color:#383838;">DP1</div>
<div class="t" style="left:986.90px;top:460.44px;font-size:10px;line-height:10px;transform:scaleX(0.885);transform-origin:0 0;color:#383838;">PF</div>
<div class="t" style="left:1067.90px;top:460.44px;font-size:10px;line-height:10px;transform:scaleX(0.885);transform-origin:0 0;color:#383838;">03-13-2-02</div>
<div class="t" style="left:1166.90px;top:460.44px;font-size:10px;line-height:10px;transform:scaleX(0.885);transform-origin:0 0;color:#383838;">001</div>
<div class="t" style="left:1231.90px;top:460.44px;font-size:10px;line-height:10px;transform:scaleX(0.885);transform-origin:0 0;color:#383838;">7674</div>
<div class="t" style="right:14.20px;top:460.44px;font-size:10px;line-height:10px;text-align:right;transform:scaleX(0.885);transform-origin:100% 0;color:#383838;">50</div>
<div class="a" style="left:1317px;top:121px;width:11px;height:372px;background:#fafafa"></div>
<div class="a" style="left:766px;top:62px;width:242px;height:119px;background:#fff;border-left:1px solid #8a8a8a;border-right:1px solid #8a8a8a;border-bottom:1px solid #6a6a6a;box-sizing:border-box;box-shadow:0 1px 1px rgba(0,0,0,0.3)"></div>
<div class="a" style="left:780px;top:181px;width:220px;height:2px;opacity:0.7;overflow:hidden"><div class="t" style="left:14px;top:-1px;font-size:10px;line-height:10px;color:#333;transform:scaleX(0.87);transform-origin:0 0">124488412</div><div class="t" style="left:77px;top:-1px;font-size:10px;line-height:10px;color:#333">DP1</div><div class="t" style="left:175px;top:-1px;font-size:10px;line-height:10px;color:#333">PU</div></div>
<div class="a" style="left:784px;top:181px;width:1px;height:3px;background:#e0e0e0"></div>
<div class="a" style="left:846px;top:181px;width:1px;height:3px;background:#e0e0e0"></div>
<div class="a" style="left:944px;top:181px;width:1px;height:3px;background:#e0e0e0"></div>
<div class="a" style="left:977px;top:71px;width:18px;height:18px;background:#f7f7f7;border:1px solid #dedede;box-sizing:border-box"></div>
<svg class="a" style="left:981px;top:75px" width="10" height="10" viewBox="0 0 10 10"><path d="M1 1 9 9M9 1 1 9" stroke="#555" stroke-width="1"/></svg>
<div class="t" style="left:794.00px;top:100.77px;font-size:9.6px;line-height:9.6px;transform:scaleX(0.9);transform-origin:0 0;color:#3a3a3a;">APG-40400 - Validação com sucesso</div>
<div class="a" style="left:767px;top:137px;width:240px;height:1px;background:#e6e6e6"></div>
<div class="a" style="left:964px;top:147px;width:32px;height:24px;background:#14b9a6;border-radius:2px"></div>
<div class="t" style="left:880.00px;width:200px;top:154.53px;font-size:10px;line-height:10px;text-align:center;transform:scaleX(0.9);transform-origin:50% 0;color:#fff;font-weight:bold;">OK</div>
<div class="a" style="left:268px;top:277px;width:52px;height:25px;"></div>
<div class="a" style="left:268px;top:277px;width:1051.6px;height:24.6px;border:3px solid #f00;box-sizing:border-box;border-radius:3px"></div>
<svg class="a" style="left:205px;top:285px" width="26" height="11" viewBox="0 0 26 11"><path d="M1.5 5.3 16 1.2 15.4 4.1H23.5Q25 4.1 25 5.4Q25 6.7 23.5 6.7H15.4L16 9.8Z" fill="#f00"/></svg>
<svg class="a" style="left:1205px;top:96px" width="32" height="33" viewBox="0 0 32 33"><path d="M26.6 3.4 13.6 19.8" stroke="#f00" stroke-width="3" stroke-linecap="round"/><path d="M4.7 30.1 10.2 16.4 17.6 22.3Z" fill="#f00"/></svg>
</body></html>
